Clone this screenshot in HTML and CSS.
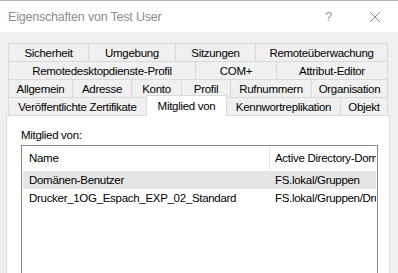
FILE: index.html
```html
<!DOCTYPE html>
<html lang="de">
<head>
    <meta charset="UTF-8">
    <title>Eigenschaften von Test User</title>
    <link rel="stylesheet" href="styles.css">
</head>
<body>
    <div class="window">
        <div class="title-bar">
            <span class="title">Eigenschaften von Test User</span>
            <span class="help">?</span>
            <svg class="close" width="12" height="12" viewBox="0 0 12 12">
                <path d="M1 1 L11 11 M11 1 L1 11" stroke="#8a8a8a" stroke-width="1" fill="none"/>
            </svg>
        </div>

        <div class="dialog">
            <div class="tabs">
                <div class="tab-row row-1">
                    <div class="tab">Sicherheit</div>
                    <div class="tab">Umgebung</div>
                    <div class="tab">Sitzungen</div>
                    <div class="tab">Remoteüberwachung</div>
                </div>
                <div class="tab-row row-2">
                    <div class="tab">Remotedesktopdienste-Profil</div>
                    <div class="tab">COM+</div>
                    <div class="tab">Attribut-Editor</div>
                </div>
                <div class="tab-row row-3">
                    <div class="tab">Allgemein</div>
                    <div class="tab">Adresse</div>
                    <div class="tab">Konto</div>
                    <div class="tab">Profil</div>
                    <div class="tab">Rufnummern</div>
                    <div class="tab">Organisation</div>
                </div>
                <div class="tab-row row-4">
                    <div class="tab">Veröffentlichte Zertifikate</div>
                    <div class="tab active">Mitglied von</div>
                    <div class="tab">Kennwortreplikation</div>
                    <div class="tab">Objekt</div>
                </div>
            </div>

            <div class="panel">
                <div class="label">Mitglied von:</div>
                <div class="list-view">
                    <div class="list-header">
                        <div class="col col-name">Name</div>
                        <div class="col col-domain">Active Directory-Domänendienste-Ordner</div>
                    </div>
                    <div class="list-row selected">
                        <div class="col col-name">Domänen-Benutzer</div>
                        <div class="col col-domain">FS.lokal/Gruppen</div>
                    </div>
                    <div class="list-row">
                        <div class="col col-name">Drucker_1OG_Espach_EXP_02_Standard</div>
                        <div class="col col-domain">FS.lokal/Gruppen/Drucker</div>
                    </div>
                </div>
            </div>
        </div>
    </div>
</body>
</html>
```

FILE: styles.css
```css
body {
    margin: 0;
    width: 398px;
    height: 273px;
    overflow: hidden;
    background-color: #f0f0f0;
    font-family: "Liberation Sans", Arial, sans-serif;
    font-size: 11.5px;
    letter-spacing: -0.3px;
    color: #000;
}
.window {
    display: flex;
    flex-direction: column;
    height: 273px;
}
.title-bar {
    display: flex;
    align-items: center;
    height: 31px;
    border-top: 1px solid #b4b4b4;
    background-color: #fff;
    padding-left: 8px;
    flex-shrink: 0;
}
.title {
    flex: 1;
    font-size: 12.5px;
    letter-spacing: -0.2px;
    color: #8c8c8c;
}
.help {
    font-size: 13px;
    color: #9a9a9a;
    margin-right: 37px;
}
.close {
    margin-right: 17px;
}
.dialog {
    flex: 1;
    display: flex;
    flex-direction: column;
    margin: 0 8px 0 6px;
    padding-top: 11px;
    min-height: 0;
}
.tabs {
    display: flex;
    flex-direction: column;
    padding: 0 2px;
}
.tab-row {
    display: grid;
    height: 18px;
}
.row-1 { grid-template-columns: 80px 87px 80px 133px; }
.row-2 { grid-template-columns: 187px 81px 112px; }
.row-3 { grid-template-columns: 64px 59px 50px 49px 81px 77px; }
.row-4 { grid-template-columns: 138px 81px 113px 48px; }
.tab {
    display: flex;
    align-items: center;
    justify-content: center;
    border-top: 1px solid #d9d9d9;
    border-left: 1px solid #d9d9d9;
    background-color: #f0f0f0;
    white-space: nowrap;
    overflow: hidden;
}
.tab:last-child {
    border-right: 1px solid #d9d9d9;
}
.tab.active {
    position: relative;
    z-index: 1;
    margin-top: -2px;
    margin-bottom: -1px;
    background-color: #fff;
    border-right: 1px solid #d9d9d9;
    padding-bottom: 1px;
}
.tab.active + .tab {
    border-left: none;
}
.panel {
    flex: 1;
    background-color: #fff;
    border: 1px solid #d9d9d9;
    border-bottom: none;
    padding: 12px 11px 0 14px;
    display: flex;
    flex-direction: column;
    min-height: 0;
}
.label {
    height: 17px;
    line-height: 14px;
}
.list-view {
    flex: 1;
    border: 1px solid #828790;
    border-bottom: none;
    padding: 0 1px;
    overflow: hidden;
}
.list-header, .list-row {
    display: flex;
    white-space: nowrap;
}
.list-header {
    height: 24px;
    align-items: center;
    margin-bottom: 1px;
}
.list-row {
    height: 18px;
    align-items: center;
}
.list-row.selected {
    background-color: #e5e5e5;
}
.col {
    overflow: hidden;
}
.col-name {
    width: 240px;
    padding-left: 6px;
    flex-shrink: 0;
}
.col-domain {
    flex: 1;
    padding-left: 6px;
}
.list-header .col-domain {
    border-left: 1px solid #e5e5e5;
    height: 24px;
    line-height: 24px;
    padding-left: 5px;
}
```
